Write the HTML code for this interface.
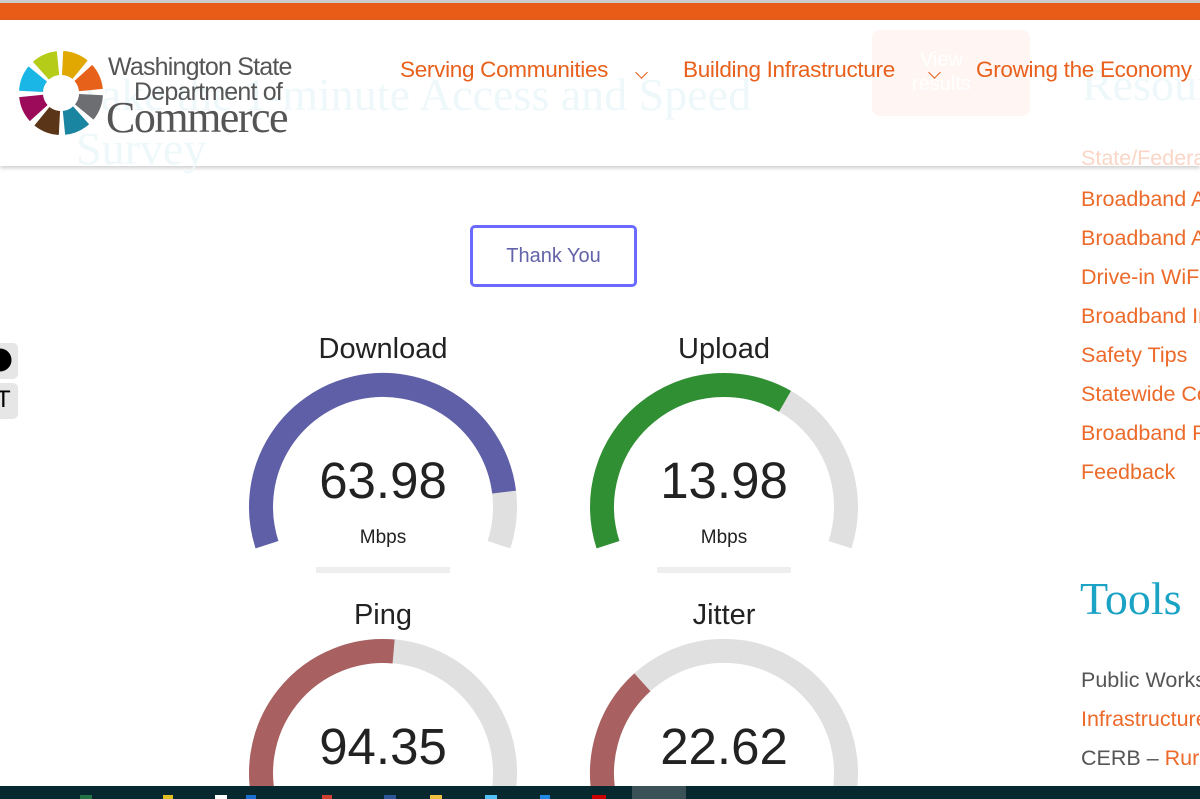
<!DOCTYPE html>
<html><head><meta charset="utf-8"><style>
*{margin:0;padding:0;box-sizing:border-box}
html,body{width:1200px;height:799px;overflow:hidden}
body{background:#fff;font-family:"Liberation Sans",Arial,sans-serif;position:relative}
#wrap{position:absolute;left:0;top:0;width:1200px;height:799px;overflow:hidden}
.a{position:absolute;white-space:nowrap}
.nav{color:#e8601c;font-size:22.5px;top:57px;letter-spacing:-.3px}
.side{left:1081px;color:#ec6a2a;font-size:21.5px}
.faded{color:#eef8fa;font-family:"Liberation Serif",serif;font-size:46px}
.chev{position:absolute;top:68px;width:9px;height:9px;border-right:1.5px solid #e8601c;border-bottom:1.5px solid #e8601c;transform:rotate(45deg)}
</style></head><body><div id="wrap">
<div class="a" style="left:0;top:0;width:1200px;height:3px;background:#ccc"></div>
<div class="a" style="left:0;top:3px;width:1200px;height:17px;background:#e85c17"></div>
<div class="a" style="left:0;top:20px;width:1200px;height:146px;background:#fff;box-shadow:0 2px 4px rgba(0,0,0,.2)"></div>
<div class="a faded" style="left:76px;top:68px">Take the 1-minute Access and Speed</div>
<div class="a faded" style="left:76px;top:122px">Survey</div>
<div class="a" style="left:872px;top:30px;width:158px;height:86px;background:#fff6f3;border-radius:8px"></div>
<div class="a" style="left:912px;top:48px;color:#fff;font-size:20px;text-align:center;line-height:24px">View<br>results</div>
<div class="a faded" style="left:1082px;top:58px">Resources</div>
<div class="a" style="left:1081px;top:146px;color:#f9d6c6;font-size:21.5px">State/Federal</div>

<svg class="a" style="left:18px;top:50px" width="86" height="86" viewBox="-43 -43 86 86">
<g fill="none" stroke-width="24">
<circle r="30" stroke="#b5cc18" stroke-dasharray="19 169.5" transform="rotate(-132)"/>
<circle r="30" stroke="#e0a800" stroke-dasharray="19 169.5" transform="rotate(-87)"/>
<circle r="30" stroke="#e8611a" stroke-dasharray="19 169.5" transform="rotate(-42)"/>
<circle r="30" stroke="#6d6e71" stroke-dasharray="19 169.5" transform="rotate(3)"/>
<circle r="30" stroke="#1a85a0" stroke-dasharray="19 169.5" transform="rotate(48)"/>
<circle r="30" stroke="#5a3518" stroke-dasharray="19 169.5" transform="rotate(93)"/>
<circle r="30" stroke="#9c0a5a" stroke-dasharray="19 169.5" transform="rotate(138)"/>
<circle r="30" stroke="#1ab7e6" stroke-dasharray="19 169.5" transform="rotate(183)"/>
</g>
<circle r="18" fill="#fff"/>
</svg>
<div class="a" style="left:108px;top:53px;color:#555;font-size:25px;letter-spacing:-.8px">Washington State</div>
<div class="a" style="left:134px;top:78px;color:#555;font-size:25px;letter-spacing:-.8px">Department of</div>
<div class="a" style="left:106px;top:92px;color:#555;font-size:44px;font-family:'Liberation Serif',serif;letter-spacing:-1.5px">Commerce</div>

<div class="a nav" style="left:400px">Serving Communities</div><div class="chev" style="left:637px"></div>
<div class="a nav" style="left:683px">Building Infrastructure</div><div class="chev" style="left:930px"></div>
<div class="a nav" style="left:976px">Growing the Economy</div>

<div class="a" style="left:470px;top:225px;width:167px;height:62px;border:3px solid #6a6aff;border-radius:5px;color:#6263a8;font-size:20px;text-align:center;line-height:56px">Thank You</div>

<div class="a" style="left:-20px;top:343px;width:38px;height:36px;background:#e6e6e6;border-radius:5px"></div>
<svg class="a" style="left:0;top:348px" width="16" height="24"><path d="M0,2 A10,10 0 0 1 0,22 Z" fill="#000"/><path d="M0,2 A10,10 0 0 1 0,22" fill="none" stroke="#000" stroke-width="3" transform="translate(0,0)"/></svg>
<div class="a" style="left:-20px;top:383px;width:38px;height:36px;background:#e6e6e6;border-radius:5px"></div>
<div class="a" style="left:-4px;top:386px;font-size:24px;color:#000">T</div>

<svg class="a" style="left:0;top:0" width="1060" height="799">
<g fill="none" stroke-width="24">
<path d="M267,544.7 A122,122 0 1 1 499,544.7" stroke="#e0e0e0"/>
<path d="M267,544.7 A122,122 0 1 1 504.1,492.1" stroke="#5f5fa8"/>
<path d="M608,544.7 A122,122 0 1 1 840,544.7" stroke="#e0e0e0"/>
<path d="M608,544.7 A122,122 0 0 1 785,401.3" stroke="#2f8f32"/>
<path d="M267,810.7 A122,122 0 1 1 499,810.7" stroke="#e0e0e0"/>
<path d="M267,810.7 A122,122 0 0 1 393.6,651.5" stroke="#a86060"/>
<path d="M608,810.7 A122,122 0 1 1 840,810.7" stroke="#e0e0e0"/>
<path d="M608,810.7 A122,122 0 0 1 642.4,682.3" stroke="#a86060"/>
</g>
<rect x="316" y="567" width="134" height="6" fill="#eee"/>
<rect x="657" y="567" width="134" height="6" fill="#eee"/>
<g font-family="Liberation Sans, Arial, sans-serif" fill="#222" text-anchor="middle">
<text x="383" y="358" font-size="29">Download</text>
<text x="724" y="358" font-size="29">Upload</text>
<text x="383" y="624" font-size="29">Ping</text>
<text x="724" y="624" font-size="29">Jitter</text>
<text x="383" y="498" font-size="51">63.98</text>
<text x="724" y="498" font-size="51">13.98</text>
<text x="383" y="764" font-size="51">94.35</text>
<text x="724" y="764" font-size="51">22.62</text>
<text x="383" y="543" font-size="19">Mbps</text>
<text x="724" y="543" font-size="19">Mbps</text>
</g>
</svg>

<div class="a side" style="top:187px">Broadband Action Team</div>
<div class="a side" style="top:226px">Broadband Access</div>
<div class="a side" style="top:265px">Drive-in WiFi Hotspots</div>
<div class="a side" style="top:304px">Broadband Infrastructure</div>
<div class="a side" style="top:343px">Safety Tips</div>
<div class="a side" style="top:382px">Statewide Connectivity</div>
<div class="a side" style="top:421px">Broadband Programs</div>
<div class="a side" style="top:460px">Feedback</div>
<div class="a" style="left:1080px;top:572px;color:#1aa3c4;font-size:46px;font-family:'Liberation Serif',serif">Tools</div>
<div class="a side" style="top:668px;color:#555">Public Works Board</div>
<div class="a side" style="top:707px">Infrastructure Assistance</div>
<div class="a side" style="top:746px;color:#555">CERB – <span style="color:#ec6a2a">Rural</span></div>

<div class="a" style="left:0;top:786px;width:1200px;height:13px;background:#06282e"></div>
<div class="a" style="left:632px;top:786px;width:54px;height:13px;background:#3a5257"></div>
<div class="a" style="left:80px;top:795px;width:12px;height:4px;background:#217346"></div>
<div class="a" style="left:163px;top:795px;width:10px;height:4px;background:#e0c020"></div>
<div class="a" style="left:215px;top:795px;width:12px;height:4px;background:#fff"></div>
<div class="a" style="left:246px;top:795px;width:10px;height:4px;background:#1a6fd0"></div>
<div class="a" style="left:322px;top:795px;width:10px;height:4px;background:#d04030"></div>
<div class="a" style="left:384px;top:795px;width:12px;height:4px;background:#2b579a"></div>
<div class="a" style="left:430px;top:795px;width:12px;height:4px;background:#f0c040"></div>
<div class="a" style="left:485px;top:795px;width:12px;height:4px;background:#4fc3f7"></div>
<div class="a" style="left:540px;top:795px;width:10px;height:4px;background:#1e88e5"></div>
<div class="a" style="left:592px;top:795px;width:14px;height:4px;background:#c00"></div>
</div></body></html>
